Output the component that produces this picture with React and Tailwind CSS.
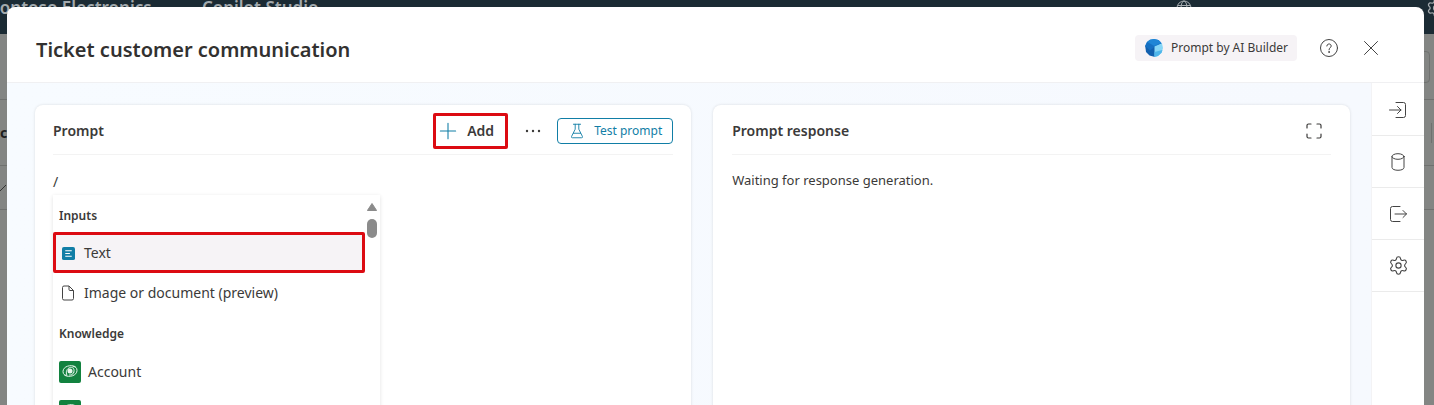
import React from "react";
import { Settings } from "lucide-react";

function Icon({ children, className = "size-5", stroke = "currentColor" }) {
  return (
    <svg viewBox="0 0 20 20" className={className} fill="none" stroke={stroke} strokeLinecap="round" strokeLinejoin="round" aria-hidden="true">
      {children}
    </svg>
  );
}

function BuilderLogo() {
  return (
    <svg viewBox="0 0 20 20" className="size-5" aria-hidden="true">
      <path d="M10 1 L14.5 2 L18 5.5 L11 9 L4.5 12 L1.2 8 L3 4 L6 1.8 Z" fill="#1b7fd0" />
      <path d="M6 1.8 L10 1 L14.5 2 L17 4.5 L10 7.5 L3 4 Z" fill="#1f86d6" />
      <path d="M1.2 8 L11 8.5 V19 L5.5 17.6 L2 14 Z" fill="#1260ae" />
      <path d="M1.2 8 L3 4 L11 8.5 L6 12.5 Z" fill="#1670c2" />
      <path d="M10.5 8.5 L18 5.5 L19 10 L17.6 14.8 L14 18 L10.5 19 Z" fill="#86d6f6" />
      <path d="M10.5 14 L18.4 12 L17.6 14.8 L14 18 L10.5 19 Z" fill="#4fb6ea" />
    </svg>
  );
}

function DataverseIcon() {
  return (
    <svg viewBox="0 0 22 22" className="size-[22px] shrink-0" aria-hidden="true">
      <rect width="22" height="22" rx="2" fill="#12823f" />
      <g fill="none" stroke="#e8f6ec" strokeWidth="1" strokeLinecap="round">
        <path d="M16.2 5.6 C12 3.2 4 5.2 4 10.6 C4 13.4 6 14.6 8 14.2 C6.4 11.6 7.6 7 11.6 6.4 C14.6 6 16 9 14.6 11.8" />
        <path d="M5.8 14.4 C10 16.8 18 14.8 18 9.4 C18 6.8 16.4 5.4 14.2 5.6" />
        <path d="M14.6 11.8 C13.8 13.6 12 14.2 10.6 14" />
      </g>
      <circle cx="11" cy="10" r="2.5" fill="#e8f6ec" />
    </svg>
  );
}

function Backdrop() {
  return (
    <div className="min-h-screen bg-[#838583]" aria-hidden="true">
      <div className="relative flex h-[34px] items-start bg-[#1b2b34] text-[#a3aaae]">
        <div className="absolute -left-[11px] -top-1 whitespace-nowrap text-[17px] font-semibold leading-6">Contoso Electronics</div>
        <div className="absolute left-[202px] -top-1 whitespace-nowrap text-[17px] font-semibold leading-6">Copilot Studio</div>
        <svg viewBox="0 0 16 16" className="absolute right-[242px] top-0 size-4" fill="none" stroke="currentColor">
          <circle cx="8" cy="8" r="7" />
          <ellipse cx="8" cy="8" rx="3" ry="7" />
          <path d="M1.5 5.5 H14.5" />
        </svg>
        <Settings className="absolute -right-3 -top-0.5 size-5" strokeWidth={1.5} />
      </div>
      <div className="flex h-[66px] items-center justify-end border-b border-[#6f716f]">
        <div className="mr-1 h-8 w-5 rounded border border-[#6f716f]" />
      </div>
      <div className="flex h-[66px] items-center justify-between border-b border-[#6f716f] text-sm font-bold leading-5 text-[#1e1e1e]">
        <span>c</span>
        <span className="mr-0.5 h-5 border-r border-[#6f716f]" />
      </div>
      <div className="flex h-11 items-center border-b border-[#6f716f] text-[#333]">
        <svg viewBox="0 0 7 8" className="h-2 w-[7px]" fill="none" stroke="currentColor"><path d="M0 7 L6 1" /></svg>
      </div>
    </div>
  );
}

function ModalHeader() {
  return (
    <header className="flex h-[76px] shrink-0 items-center justify-between border-b border-[#f0f0f2] pl-[29px] pr-[43px]">
      <h1 className="pt-2.5 text-xl font-semibold leading-7 text-[#323130]">Ticket customer communication</h1>
      <div className="flex items-center gap-[22px] pt-1.5">
        <div className="flex h-[26px] items-center gap-[7px] rounded bg-[#f6f3f6] px-[9px] text-xs leading-5">
          <BuilderLogo />
          <span>Prompt by AI Builder</span>
        </div>
        <button type="button" aria-label="Help" className="text-[#444]">
          <Icon>
            <circle cx="10" cy="10" r="8.5" />
            <path d="M7.8 8 C7.8 5.2 12.2 5.2 12.2 8 C12.2 9.6 10 9.8 10 11.8" />
            <circle cx="10" cy="14" r="0.4" fill="currentColor" />
          </Icon>
        </button>
        <button type="button" aria-label="Close" className="text-[#444]">
          <Icon><path d="M3.5 3.5 L16.5 16.5 M16.5 3.5 L3.5 16.5" /></Icon>
        </button>
      </div>
    </header>
  );
}

function MenuHeading({ children }) {
  return <h3 className="flex h-10 items-center px-1.5 pt-0.5 text-xs font-semibold leading-5">{children}</h3>;
}

function SlashMenu() {
  return (
    <div className="flex h-[260px] w-[327px] bg-white shadow-[0_1px_4px_rgba(0,0,0,0.12)]">
      <div className="h-full w-[312px] overflow-hidden">
        <MenuHeading>Inputs</MenuHeading>
        <button type="button" className="-mt-[3px] flex h-[41px] w-full items-center gap-[9px] rounded-xs border-3 border-[#dc0b12] bg-[#f6f3f6] px-1.5 pt-px text-sm leading-5">
          <svg viewBox="0 0 14 14" className="size-[13px]" aria-hidden="true">
            <rect width="14" height="14" rx="2" fill="#117ea6" />
            <path d="M3.5 4 H10.5 M3.5 7 H8.5 M3.5 10 H10.5" stroke="#fff" strokeWidth="1.1" />
          </svg>
          Text
        </button>
        <button type="button" className="flex h-10 w-full items-center gap-[9px] px-2 text-sm leading-5">
          <svg viewBox="0 0 14 16" className="h-4 w-3.5" fill="none" stroke="#444" aria-hidden="true">
            <path d="M3 1 H8 L12.5 5.5 V13.5 A1.5 1.5 0 0 1 11 15 H3 A1.5 1.5 0 0 1 1.5 13.5 V2.5 A1.5 1.5 0 0 1 3 1 Z M8 1 V4.5 A1 1 0 0 0 9 5.5 H12.5" />
          </svg>
          Image or document (preview)
        </button>
        <MenuHeading>Knowledge</MenuHeading>
        <button type="button" className="flex h-[38px] w-full items-center gap-[7px] px-1.5 text-sm leading-5"><DataverseIcon />Account</button>
        <button type="button" aria-label="Contact" className="flex h-10 w-full items-center gap-2 px-1.5"><DataverseIcon /></button>
      </div>
      <div className="flex w-3.5 flex-col items-center gap-2 pt-2" aria-hidden="true">
        <svg viewBox="0 0 10 8" className="h-2 w-2.5"><path d="M5 0.5 L9.6 7.5 H0.4 Z" fill="#8b8b8b" stroke="#8b8b8b" strokeLinejoin="round" /></svg>
        <div className="h-[19px] w-2.5 rounded-full bg-[#8b8b8b]" />
      </div>
    </div>
  );
}

function PromptPanel() {
  return (
    <section className="flex-[29] rounded-lg bg-white px-[18px] shadow-[0_0_3px_rgba(0,0,0,0.12)]">
      <div className="flex h-[50px] items-center justify-between border-b border-[#f3f3f3] pt-0.5">
        <h2 className="text-sm font-semibold leading-5">Prompt</h2>
        <div className="flex items-center">
          <button type="button" className="flex h-9 w-[75px] items-center gap-2.5 rounded-xs border-3 border-[#dc0b12] px-[3px] text-sm font-semibold leading-5">
            <Icon className="size-[18px]" stroke="#117ea6"><path d="M10 1.5 V18.5 M1.5 10 H18.5" strokeWidth="1.2" /></Icon>
            Add
          </button>
          <button type="button" aria-label="More options" className="mx-3 flex w-[25px] justify-center">
            <svg viewBox="0 0 16 4" className="h-1 w-4" fill="#3b3a39" aria-hidden="true"><circle cx="2" cy="2" r="1.2" /><circle cx="8" cy="2" r="1.2" /><circle cx="14" cy="2" r="1.2" /></svg>
          </button>
          <button type="button" className="flex h-[26px] w-[116px] items-center justify-center gap-2 rounded border border-[#117ea6] text-xs leading-5 text-[#117ea6]">
            <Icon className="size-[18px]"><path d="M6 2.5 H14 M8 2.5 V8 L4 16 Q3.4 17.5 5 17.5 H15 Q16.6 17.5 16 16 L12 8 V2.5 M6 12.5 H14" /></Icon>
            Test prompt
          </button>
        </div>
      </div>
      <div className="relative pt-[17px]">
        <div role="textbox" contentEditable suppressContentEditableWarning aria-label="Prompt text" className="h-[23px] text-sm leading-5 outline-none">/</div>
        <div className="absolute left-0 top-10"><SlashMenu /></div>
      </div>
    </section>
  );
}

function ResponsePanel() {
  return (
    <section className="flex-[28] rounded-lg bg-white px-[19px] shadow-[0_0_3px_rgba(0,0,0,0.12)]">
      <div className="flex h-[50px] items-center justify-between border-b border-[#f3f3f3] pr-[7px] pt-0.5">
        <h2 className="text-sm font-semibold leading-5">Prompt response</h2>
        <button type="button" aria-label="Expand">
          <Icon><path d="M3 7 V4.5 A1.5 1.5 0 0 1 4.5 3 H7 M13 3 H15.5 A1.5 1.5 0 0 1 17 4.5 V7 M17 13 V15.5 A1.5 1.5 0 0 1 15.5 17 H13 M7 17 H4.5 A1.5 1.5 0 0 1 3 15.5 V13" strokeWidth="1.2" /></Icon>
        </button>
      </div>
      <p className="pt-[15px] text-[13px] leading-5">Waiting for response generation.</p>
    </section>
  );
}

const railItems = [
  { label: "Inputs", icon: <Icon><path d="M8 2.5 H15.5 A2 2 0 0 1 17.5 4.5 V15.5 A2 2 0 0 1 15.5 17.5 H8 M1.5 10 H13 M9.5 6.5 L13 10 L9.5 13.5" /></Icon> },
  { label: "Knowledge", icon: <Icon><ellipse cx="10" cy="4.5" rx="6" ry="2.8" /><path d="M4 4.5 V15.5 C4 19.2 16 19.2 16 15.5 V4.5" /></Icon> },
  { label: "Output", icon: <Icon><path d="M12 2.5 H4.5 A2 2 0 0 0 2.5 4.5 V15.5 A2 2 0 0 0 4.5 17.5 H12 M7 10 H18.5 M15 6.5 L18.5 10 L15 13.5" /></Icon> },
  { label: "Settings", icon: <Settings className="size-[21px]" strokeWidth={1.25} aria-hidden="true" /> },
];

function SideRail() {
  return (
    <nav aria-label="Prompt tools" className="w-[53px] shrink-0 border-l border-[#f3f3f5] bg-white pt-px">
      {railItems.map((item) => (
        <button key={item.label} type="button" aria-label={item.label} className="flex h-[52px] w-full items-center justify-center border-b border-[#ebebeb] text-[#444]">
          {item.icon}
        </button>
      ))}
    </nav>
  );
}

export default function App() {
  return (
    <div className="relative h-screen overflow-hidden font-['Noto_Sans','Open_Sans',sans-serif] text-[#3b3a39]">
      <Backdrop />
      <div role="dialog" aria-label="Ticket customer communication" className="absolute bottom-0 left-[7px] right-[10px] top-[7px] flex flex-col overflow-hidden rounded-t-lg bg-white">
        <ModalHeader />
        <div className="flex grow">
          <main className="-mb-4 flex grow gap-[22px] bg-linear-to-r from-[#f7fbff] to-[#f6f9fe] pl-7 pr-[21px] pt-[22px]">
            <PromptPanel />
            <ResponsePanel />
          </main>
          <SideRail />
        </div>
      </div>
    </div>
  );
}
